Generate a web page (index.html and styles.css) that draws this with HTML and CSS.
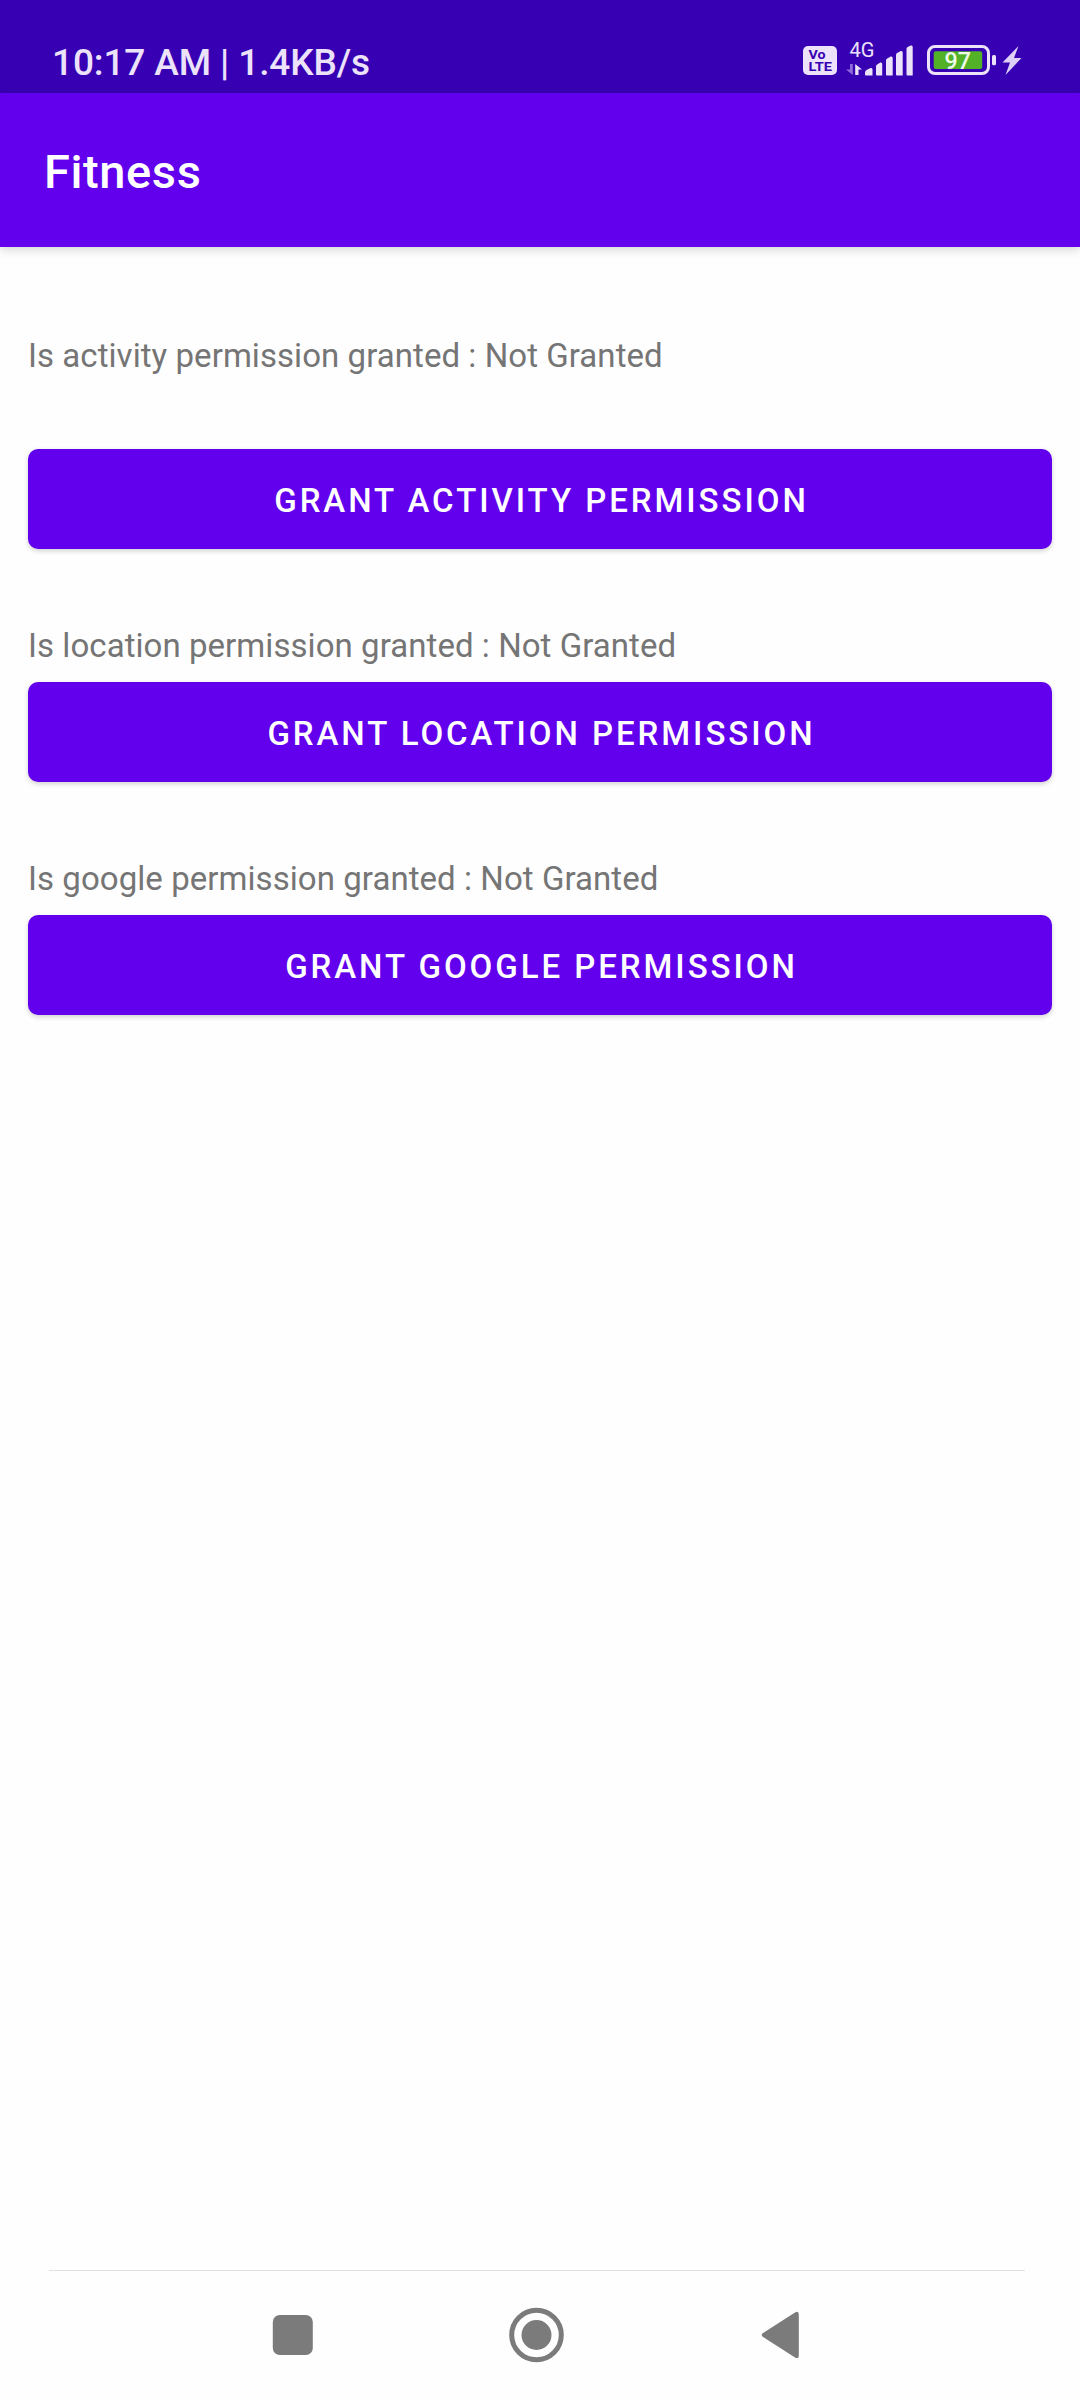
FILE: index.html
```html
<!DOCTYPE html>
<html lang="en">
<head>
<meta charset="utf-8">
<title>Fitness</title>
<link rel="stylesheet" href="styles.css">
</head>
<body>
<div class="screen">
  <header class="status-bar">
    <span class="status-text">10:17 AM | 1.4KB/s</span>
    <svg class="status-icons" width="240" height="50" viewBox="0 0 240 50" aria-hidden="true">
      <rect x="13" y="6" width="34" height="29" rx="5" fill="#ece3fb"/>
      <g class="volte">
        <text x="18.500" y="18.500" textLength="17" lengthAdjust="spacingAndGlyphs">Vo</text>
        <text x="18.500" y="31.200" textLength="23.500" lengthAdjust="spacingAndGlyphs">LTE</text>
      </g>
      <text class="network" x="59.500" y="17" textLength="25" lengthAdjust="spacingAndGlyphs">4G</text>
      <path d="M62.800 24v11L56 29.500h4V24z" fill="#8f6bdb"/>
      <path d="M65.200 35V24l6.800 5.500h-3.500V35z" fill="#ece3fb"/>
      <g fill="#ece3fb">
        <path d="M75 32.500q0-1.500 1.500-2.500l4-2q2-.5 2 1.500v6H76q-1 0-1-1z"/>
        <path d="M86 26.500q0-1.500 1.200-2l3-2q2-.5 2 1.500v11.500H87q-1 0-1-1z"/>
        <path d="M96 20.500q0-1.500 1.200-2l3.500-2q2-.5 2 1.500v17.500H97q-1 0-1-1z"/>
        <path d="M106 15q0-1.500 1.200-2l3.500-2q2-.5 2 1.500v23H107q-1 0-1-1z"/>
        <path d="M116.500 9q0-1.500 1.200-2l3-1.500q2-.5 2 1.500v28.500H117.500q-1 0-1-1z"/>
      </g>
      <rect x="138.500" y="6.500" width="60" height="27" rx="6.500" fill="none" stroke="#ece3fb" stroke-width="3"/>
      <rect x="143.700" y="11.300" width="48.500" height="17.700" rx="2" fill="#52b127"/>
      <rect x="202" y="15" width="4" height="10.300" rx="1.500" fill="#ece3fb"/>
      <text class="battery" x="154.500" y="29" textLength="26.500" lengthAdjust="spacingAndGlyphs">97</text>
      <path d="M228.500 6l-16 16.500h7.500L215.500 35l16-17h-7.500z" fill="#ddd0f6"/>
    </svg>
  </header>
  <div class="app-bar"><h1 class="title">Fitness</h1></div>
  <main class="content">
    <section class="permission permission-spaced">
      <p class="label">Is activity permission granted : Not Granted</p>
      <button class="button">GRANT ACTIVITY PERMISSION</button>
    </section>
    <section class="permission">
      <p class="label">Is location permission granted : Not Granted</p>
      <button class="button">GRANT LOCATION PERMISSION</button>
    </section>
    <section class="permission">
      <p class="label">Is google permission granted : Not Granted</p>
      <button class="button">GRANT GOOGLE PERMISSION</button>
    </section>
  </main>
  <nav class="nav-bar">
    <svg width="976" height="130" viewBox="0 0 976 130" fill="#7b7b7b" aria-hidden="true">
      <rect x="223.800" y="45" width="40" height="40" rx="7"/>
      <circle cx="487.500" cy="65" r="24.800" fill="none" stroke="#7b7b7b" stroke-width="5"/>
      <circle cx="487.500" cy="65" r="15"/>
      <path d="M713.700 63.300L746 42.500q3.800-2 3.800 2v41q0 4-3.800 2L713.700 66.700q-2-1.700 0-3.400z"/>
    </svg>
  </nav>
</div>
</body>
</html>
```
FILE: styles.css
```css
body {
  margin: 0;
  font-family: Roboto, sans-serif;
  background: #fefefe;
}

.screen {
  display: flex;
  flex-direction: column;
  width: 1080px;
  height: 2400px;
}

.status-bar {
  display: flex;
  justify-content: space-between;
  box-sizing: border-box;
  height: 93px;
  padding: 40px 50px 0 52px;
  background: #3700b3;
  color: #ece3fb;
}

.status-text {
  padding-top: 2px;
  font-size: 37px;
  font-weight: 500;
  line-height: 42px;
  letter-spacing: -.12px;
  white-space: nowrap;
}

.status-icons {
  overflow: visible;
}

.volte {
  fill: #3700b3;
  font-size: 13px;
  font-weight: 700;
}

.network {
  fill: #ece3fb;
  font-size: 20px;
}

.battery {
  fill: #f0fbe9;
  font-size: 23.500px;
  font-weight: 500;
}

.app-bar {
  box-sizing: border-box;
  height: 154px;
  padding: 51px 44px 0;
  background: #6200ee;
  box-shadow: 0 3px 9px rgba(0, 0, 0, .16);
}

.title {
  margin: 0;
  color: #fff;
  font-size: 47px;
  font-weight: 500;
  line-height: 55px;
  letter-spacing: .6px;
}

.content {
  flex: 1;
  padding: 89px 28px 0;
}

.permission {
  display: flex;
  flex-direction: column;
  gap: 17px;
  margin-bottom: 77px;
}

.permission-spaced {
  gap: 74px;
}

.label {
  margin: 0;
  color: #757575;
  font-size: 33px;
  line-height: 39px;
  letter-spacing: .055px;
  white-space: nowrap;
}

.button {
  height: 100px;
  padding: 2px 0 0 3px;
  border: 0;
  border-radius: 10px;
  background: #6200ee;
  box-shadow: 0 2px 5px rgba(0, 0, 0, .18);
  color: #fff;
  font: 500 33px/39px Roboto, sans-serif;
  letter-spacing: 2.95px;
}

.nav-bar {
  height: 129px;
  margin: 0 55px 0 49px;
  border-top: 1px solid #e2e2e2;
}

.nav-bar svg {
  display: block;
  margin-top: -1px;
}
```
